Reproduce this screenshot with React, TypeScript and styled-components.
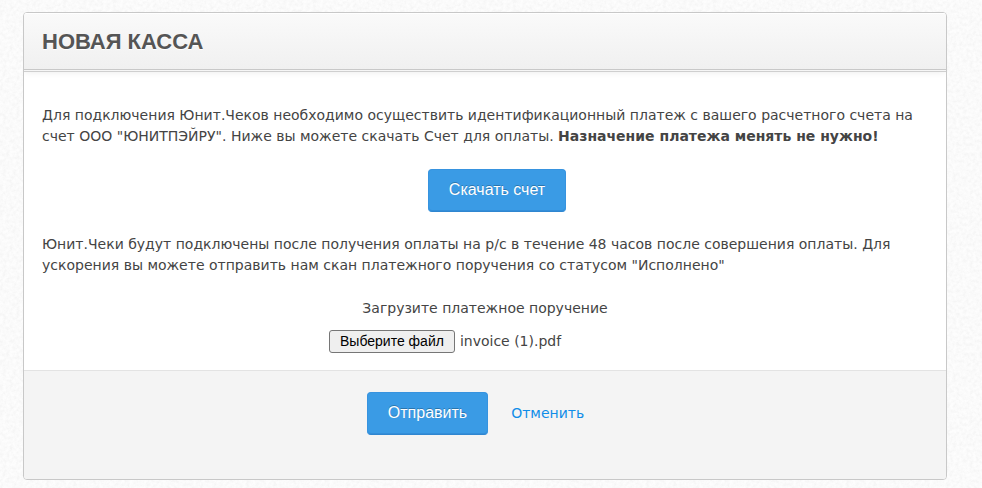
import { useRef, useState } from 'react';
import styled, { createGlobalStyle } from 'styled-components';

const grain =
  "url(\"data:image/svg+xml,%3Csvg xmlns='http://www.w3.org/2000/svg' width='200' height='200'%3E%3Cfilter id='n'%3E%3CfeTurbulence type='fractalNoise' baseFrequency='0.3' numOctaves='3' stitchTiles='stitch'/%3E%3CfeColorMatrix values='0 0 0 0 0.9 0 0 0 0 0.9 0 0 0 0 0.9 1.6 0 0 0 -0.5'/%3E%3C/filter%3E%3Crect width='200' height='200' filter='url(%23n)'/%3E%3C/svg%3E\")";

const GlobalStyle = createGlobalStyle`
  * { box-sizing: border-box; }
  body {
    margin: 0;
    background: #fdfdfd ${grain};
    color: #444;
    font: 14px/21px Verdana, "DejaVu Sans", sans-serif;
  }
`;

const Page = styled.main`
  padding: 12px 35px 8px 23px;
`;

const Card = styled.form`
  border: 1px solid #c8c8c8;
  border-radius: 4px;
  background: #fff;
  overflow: hidden;
`;

const CardHeader = styled.header`
  padding: 15px 18px 13px;
  border-bottom: 1px solid #c8c8c8;
  background: linear-gradient(#fafafa, #f0f0f0);
  box-shadow: inset 0 1px #fff, 0 1px #f6f6f6, 0 2px #cfcfcf, 0 3px 6px #f0f0f0;
`;

const Title = styled.h1`
  margin: 0;
  color: #555;
  font: bold 22px/28px Arial, "Liberation Sans", sans-serif;
  text-shadow: 0 1px #fff;
  text-transform: uppercase;
`;

const CardBody = styled.div`
  display: flex;
  flex-direction: column;
  gap: 22px;
  padding: 35px 18px 17px;
`;

const Paragraph = styled.p`
  margin: 0;
`;

const DownloadRow = styled.div`
  display: flex;
  justify-content: center;
  padding-left: 24px;
`;

const PrimaryButton = styled.button`
  padding: 11px 20px 12px;
  border: 1px solid #3793df;
  border-bottom-color: #2f86d0;
  border-radius: 4px;
  background: #3a9be5;
  box-shadow: inset 0 -1px #338ed9;
  color: #fff;
  font: 16px/18px Arial, "Liberation Sans", sans-serif;
  text-shadow: 0 -1px rgba(0, 0, 0, 0.25);
  cursor: pointer;
`;

const UploadField = styled.div`
  display: flex;
  flex-direction: column;
  align-items: center;
  gap: 11px;
`;

const FilePicker = styled.div`
  display: flex;
  align-items: center;
  gap: 5px;
  width: 312px;
`;

const FileButton = styled.button`
  flex: none;
  padding: 2px 10px;
  border: 1px solid #767676;
  border-radius: 3px;
  background: #efefef;
  color: #000;
  font: 14px/17px Arial, "Liberation Sans", sans-serif;
`;

const CardFooter = styled.footer`
  display: flex;
  align-items: center;
  justify-content: center;
  gap: 23px;
  padding: 21px 19px 44px 0;
  border-top: 1px solid #e3e3e3;
  background: #f4f4f4;
`;

const CancelLink = styled.a`
  color: #108de8;
  text-decoration: none;
`;

export default function App() {
  const picker = useRef<HTMLInputElement>(null);
  const [fileName, setFileName] = useState('invoice (1).pdf');

  return (
    <>
      <GlobalStyle />
      <Page>
        <Card onSubmit={(event) => event.preventDefault()}>
          <CardHeader>
            <Title>Новая касса</Title>
          </CardHeader>
          <CardBody>
            <Paragraph>
              Для подключения Юнит.Чеков необходимо осуществить идентификационный платеж с вашего
              расчетного счета на счет ООО "ЮНИТПЭЙРУ". Ниже вы можете скачать Счет для оплаты.{' '}
              <strong>Назначение платежа менять не нужно!</strong>
            </Paragraph>
            <DownloadRow>
              <PrimaryButton type="button">Скачать счет</PrimaryButton>
            </DownloadRow>
            <Paragraph>
              Юнит.Чеки будут подключены после получения оплаты на р/с в течение 48 часов после
              совершения оплаты. Для ускорения вы можете отправить нам скан платежного поручения со
              статусом "Исполнено"
            </Paragraph>
            <UploadField>
              <label htmlFor="payment-order">Загрузите платежное поручение</label>
              <FilePicker>
                <input
                  id="payment-order"
                  ref={picker}
                  type="file"
                  hidden
                  onChange={(event) => setFileName(event.target.files?.[0]?.name ?? '')}
                />
                <FileButton type="button" onClick={() => picker.current?.click()}>
                  Выберите файл
                </FileButton>
                <output htmlFor="payment-order">{fileName}</output>
              </FilePicker>
            </UploadField>
          </CardBody>
          <CardFooter>
            <PrimaryButton type="submit">Отправить</PrimaryButton>
            <CancelLink href="#cancel">Отменить</CancelLink>
          </CardFooter>
        </Card>
      </Page>
    </>
  );
}
